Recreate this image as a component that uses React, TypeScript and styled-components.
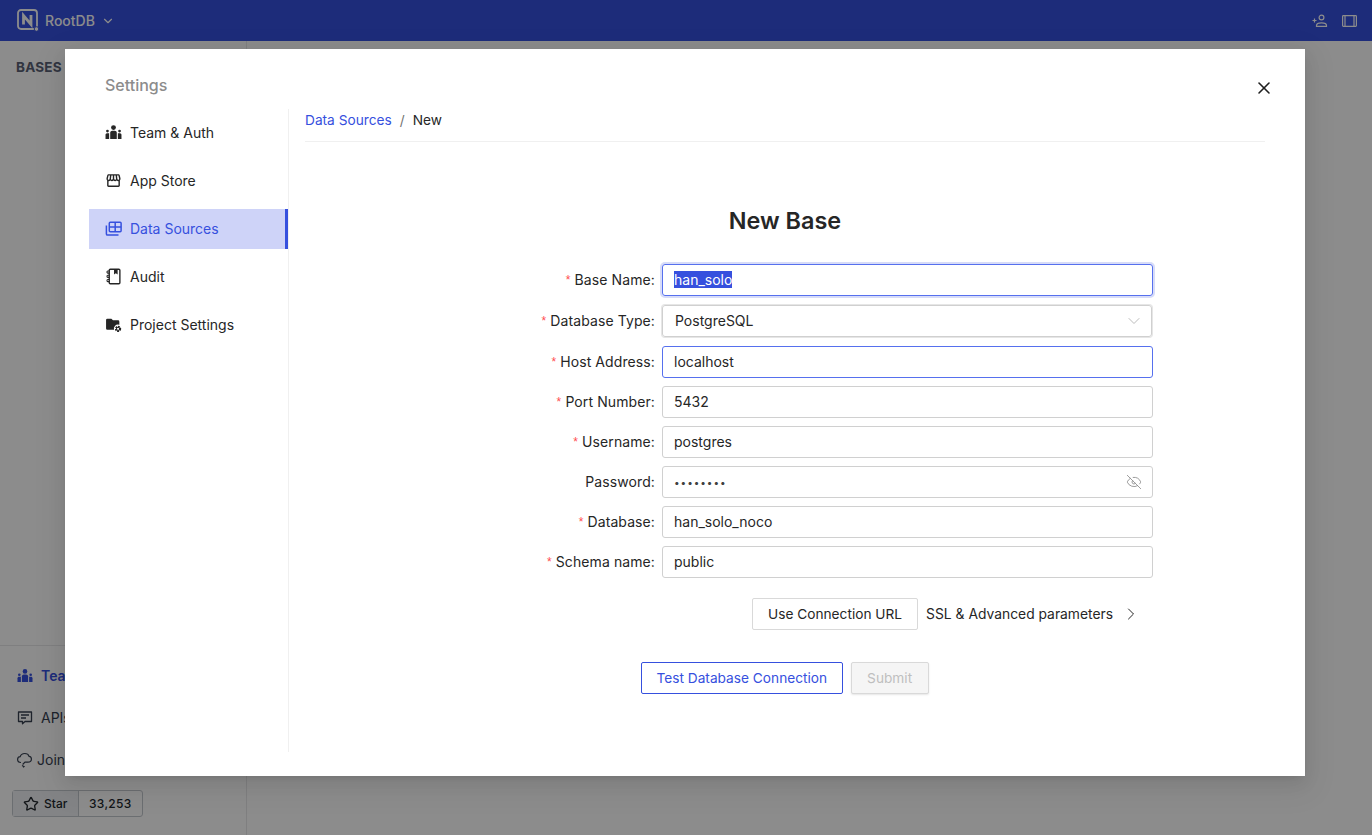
import styled, { createGlobalStyle } from "styled-components";
import { MdOutlineStorefront } from "react-icons/md";
import { LuChevronDown, LuChevronRight, LuEyeOff, LuStar, LuX } from "react-icons/lu";

const primary = "#3650de";

const GlobalStyle = createGlobalStyle`
  html, body { margin: 0; padding: 0; height: 100%; }
  body {
    font-family: Inter, "Liberation Sans", sans-serif;
    color: #262626;
    background: #fff;
    overflow: hidden;
  }
  * { box-sizing: border-box; }
`;

const Page = styled.div`
  position: relative;
  width: 1372px;
  height: 835px;
  display: flex;
  flex-direction: column;
  overflow: hidden;
`;

const TopBar = styled.header`
  height: 41px;
  flex: none;
  background: ${primary};
  color: #fff;
  display: flex;
  align-items: center;
  padding: 0 15px 0 17px;
`;

const Brand = styled.div`
  display: flex;
  align-items: center;
  gap: 6px;
  font-size: 14px;
  font-weight: 500;
  flex: 1;
  svg { flex: none; }
`;

const BarIcons = styled.div`
  display: flex;
  align-items: center;
  gap: 14px;
  color: #fff;
`;

const Workspace = styled.div`
  flex: 1;
  display: flex;
  min-height: 0;
`;

const SideNav = styled.aside`
  width: 247px;
  flex: none;
  border-right: 1px solid #e7e7e9;
  display: flex;
  flex-direction: column;
`;

const BasesTitle = styled.div`
  padding: 18px 16px 0;
  font-size: 13.5px;
  font-weight: 700;
  color: #5a6276;
  letter-spacing: 0.2px;
  flex: 1;
`;

const SideFooter = styled.div`
  border-top: 1px solid #e7e7e9;
  padding: 9px 12px 18px 17px;
  display: flex;
  flex-direction: column;
`;

const SideLink = styled.div<{ $active?: boolean; $gap?: number }>`
  height: 42px;
  padding-bottom: 1px;
  display: flex;
  align-items: center;
  gap: ${(p) => p.$gap ?? 8}px;
  font-size: 14px;
  font-weight: ${(p) => (p.$active ? 600 : 400)};
  color: ${(p) => (p.$active ? primary : "#374151")};
  svg { flex: none; }
`;

const StarGroup = styled.div`
  display: flex;
  align-self: flex-start;
  margin: 9px 0 0 -5px;
  height: 27px;
  border: 1px solid #c4c8ce;
  border-radius: 3px;
  font-size: 12px;
  font-weight: 500;
  color: #24292f;
`;

const StarButton = styled.div`
  display: flex;
  align-items: center;
  gap: 5px;
  width: 66px;
  padding-left: 10px;
  background: #eef1f4;
  border-right: 1px solid #c4c8ce;
`;

const StarCount = styled.div`
  display: flex;
  align-items: center;
  padding: 0 10px;
  letter-spacing: 0.3px;
`;

const Backdrop = styled.div`
  position: absolute;
  inset: 0;
  background: rgba(0, 0, 0, 0.45);
`;

const Modal = styled.div`
  position: absolute;
  left: 65px;
  top: 49px;
  width: 1240px;
  height: 727px;
  background: #fff;
  box-shadow: 0 6px 16px rgba(0, 0, 0, 0.08), 0 3px 6px -4px rgba(0, 0, 0, 0.12), 0 9px 28px 8px rgba(0, 0, 0, 0.05);
  padding: 24px 40px 24px 24px;
  display: flex;
  flex-direction: column;
`;

const CloseButton = styled.button`
  position: absolute;
  top: 29px;
  right: 31px;
  width: 20px;
  height: 20px;
  padding: 0;
  border: 0;
  background: none;
  color: #1f1f1f;
  display: flex;
  align-items: center;
  justify-content: center;
`;

const ModalTitle = styled.div`
  height: 36px;
  padding-left: 16px;
  line-height: 24px;
  font-size: 16px;
  font-weight: 500;
  color: #8c8c8c;
  flex: none;
`;

const ModalBody = styled.div`
  flex: 1;
  display: flex;
  min-height: 0;
`;

const Menu = styled.nav`
  width: 200px;
  flex: none;
  border-right: 1px solid #f0f0f0;
  padding-top: 4px;
  display: flex;
  flex-direction: column;
  gap: 8px;
`;

const MenuItem = styled.div<{ $selected?: boolean }>`
  height: 40px;
  padding: 0 0 2px 16px;
  display: flex;
  align-items: center;
  gap: 8px;
  font-size: 14px;
  color: ${(p) => (p.$selected ? primary : "#262626")};
  background: ${(p) => (p.$selected ? "#ced3f8" : "transparent")};
  border-right: ${(p) => (p.$selected ? `3px solid ${primary}` : "0")};
  svg { flex: none; }
`;

const Content = styled.main`
  flex: 1;
  min-width: 0;
  padding-left: 16px;
  display: flex;
  flex-direction: column;
`;

const Crumbs = styled.div`
  height: 33px;
  flex: none;
  border-bottom: 1px solid #f0f0f0;
  padding-bottom: 10px;
  display: flex;
  align-items: center;
  gap: 8px;
  font-size: 13.7px;
  color: #262626;
`;

const CrumbLink = styled.span`
  color: ${primary};
`;

const CrumbSep = styled.span`
  color: #737373;
`;

const Heading = styled.h1`
  margin: 63px 0 27px;
  height: 32px;
  line-height: 32px;
  font-size: 23.4px;
  font-weight: 600;
  text-align: center;
  color: #262626;
`;

const Form = styled.div`
  display: flex;
  flex-direction: column;
  gap: 8px;
`;

const Row = styled.div<{ $tight?: boolean }>`
  display: flex;
  height: 32px;
  margin-bottom: ${(p) => (p.$tight ? "1px" : "0")};
`;

const Label = styled.label`
  width: 357px;
  flex: none;
  padding: 0 7px 1px 0;
  display: flex;
  align-items: center;
  justify-content: flex-end;
  font-size: 14px;
  color: #262626;
  white-space: nowrap;
  letter-spacing: 0.1px;
`;

const Required = styled.span`
  color: #ff4d4f;
  font-size: 12px;
  margin-right: 4px;
  font-family: "Liberation Sans", sans-serif;
`;

const Field = styled.div<{ $focus?: "ring" | "line"; $select?: boolean }>`
  width: ${(p) => (p.$select ? "490px" : "491px")};
  height: 32px;
  flex: none;
  border-radius: 3px;
  border: 1px solid ${(p) => (p.$focus ? "#5670ee" : "#d0d0d0")};
  box-shadow: ${(p) =>
    p.$focus === "ring"
      ? "0 0 0 2px rgba(54, 80, 222, 0.2)"
      : p.$select
        ? "0 0 0 1px #e6e6e6"
        : "none"};
  padding: ${(p) => (p.$select ? "0 7px 1px 12px" : "0 10px 1px 11px")};
  display: flex;
  align-items: center;
  justify-content: space-between;
  font-size: 14px;
  color: #262626;
`;

const Selected = styled.span`
  background: ${primary};
  color: #fff;
  line-height: 22px;
`;

const Dots = styled.span`
  letter-spacing: 0.95px;
  font-size: 10px;
  color: #404040;
`;

const MutedIcon = styled.span<{ $light?: boolean }>`
  display: flex;
  color: ${(p) => (p.$light ? "#b5b5b5" : "#8c8c8c")};
`;

const ExtraRow = styled.div`
  display: flex;
  align-items: center;
  margin: 20px 0 0 447px;
  height: 32px;
  gap: 8px;
`;

const Button = styled.button<{ $variant?: "primary" | "disabled" }>`
  height: 32px;
  padding: ${(p) => (p.$variant === "primary" ? "0 14.5px 1px" : "0 15px 1px")};
  border-radius: 2px;
  font-family: inherit;
  font-size: 13.7px;
  min-width: 78px;
  background: ${(p) => (p.$variant === "disabled" ? "#f5f5f5" : "#fff")};
  color: ${(p) => (p.$variant === "primary" ? primary : p.$variant === "disabled" ? "#bfbfbf" : "#262626")};
  border: 1px solid ${(p) => (p.$variant === "primary" ? primary : "#d9d9d9")};
  box-shadow: ${(p) => (p.$variant === "disabled" ? "0 1px 2px rgba(0, 0, 0, 0.1)" : "none")};
`;

const Advanced = styled.div`
  display: flex;
  align-items: center;
  gap: 8px;
  padding-bottom: 1px;
  font-size: 13.85px;
  color: #262626;
`;

const Actions = styled.div`
  display: flex;
  margin: 32px 0 0 336px;
  gap: 8px;
`;

const LogoMark = () => (
  <svg width="22" height="23" viewBox="0 0 22 23" fill="none">
    <rect x="1" y="1" width="19" height="19" rx="3" stroke="currentColor" strokeWidth="1.8" />
    <path d="M6.500 15.500V6.500L14 15.500V6" stroke="currentColor" strokeWidth="2.8" />
    <circle cx="19.500" cy="20" r="2.300" fill="currentColor" stroke={primary} strokeWidth="1" />
  </svg>
);

const AddUserIcon = () => (
  <svg width="16" height="16" viewBox="0 0 16 16" fill="none" stroke="currentColor" strokeWidth="1.2">
    <circle cx="9.500" cy="4.500" r="2.400" />
    <path d="M4.500 13.300v-.8c0-1.600 2.400-2.700 5-2.700s5 1.100 5 2.700v.8z" />
    <path d="M0.500 7.500h4M2.500 5.500v4" />
  </svg>
);

const PanelIcon = () => (
  <svg width="15" height="12" viewBox="0 0 15 12" fill="none" stroke="currentColor" strokeWidth="1.2">
    <rect x="0.600" y="0.600" width="13.800" height="10.800" rx="0.800" />
    <path d="M3 .6v10.800M12 .6v10.800" />
  </svg>
);

const TeamIcon = ({ size = 17 }: { size?: number }) => (
  <svg width={size} height={size} viewBox="0 0 16 16" fill="currentColor">
    <circle cx="8" cy="3.400" r="2.300" />
    <path d="M4.900 14V8.300c0-1.100.9-1.900 1.900-1.900h2.400c1 0 1.900.8 1.900 1.900V14z" />
    <circle cx="2.300" cy="6.700" r="1.300" />
    <path d="M.5 14v-3.800c0-.8.600-1.500 1.400-1.500h2V14z" />
    <circle cx="13.700" cy="6.700" r="1.300" />
    <path d="M15.500 14v-3.800c0-.8-.6-1.500-1.400-1.500h-2V14z" />
  </svg>
);

const TablesIcon = () => (
  <svg width="17" height="17" viewBox="0 0 17 17" fill="none" stroke="currentColor" strokeWidth="1.5">
    <rect x="4.300" y="2.200" width="11.800" height="9.600" rx="1" />
    <path d="M4.300 7h11.800M10.200 2.200v9.600" />
    <path d="M1.400 5.500v8.400c0 .7.500 1.200 1.200 1.200h10.900" />
  </svg>
);

const NotebookIcon = () => (
  <svg width="17" height="17" viewBox="0 0 16 16" fill="none" stroke="currentColor" strokeWidth="1.3">
    <rect x="4" y="1.200" width="10" height="13.600" rx="1" />
    <path d="M4 2.800H2.600c-1 0-1 2 0 2H4M4 6.800H2.600c-1 0-1 2 0 2H4M4 10.800H2.600c-1 0-1 2 0 2H4" strokeWidth="1" />
    <path d="M8.500 1.200h3.400v5l-1.700-1.300-1.700 1.300z" fill="currentColor" stroke="none" />
  </svg>
);

const FolderGearIcon = () => (
  <svg width="17" height="17" viewBox="0 0 16 16" fill="currentColor">
    <path d="M1 3.800a1.200 1.200 0 0 1 1.200-1.200h3.800l1.500 1.500h4.800A1.200 1.200 0 0 1 13.500 5.300V8.300a3.800 3.800 0 0 0-5 4.700H2.200A1.200 1.200 0 0 1 1 11.800z" />
    <circle cx="12.300" cy="12.100" r="2.100" fill="none" stroke="currentColor" strokeWidth="1.700" strokeDasharray="1.500 0.700" />
    <circle cx="12.300" cy="12.100" r="1.500" fill="none" stroke="currentColor" strokeWidth="1" />
  </svg>
);

const ChatIcon = () => (
  <svg width="16" height="16" viewBox="0 0 16 16" fill="none" stroke="currentColor" strokeWidth="1.3">
    <path d="M1.500 2h13v9.500H8l-2.500 2.200v-2.200h-4z" strokeLinejoin="round" />
    <path d="M4 5h8M4 8h5" />
  </svg>
);

const CloudIcon = () => (
  <svg width="15" height="16" viewBox="0 0 15 16" fill="none" stroke="currentColor" strokeWidth="1.2">
    <path d="M4 10.500c-2 0-3.400-1.200-3.400-3 0-1.600 1.200-2.700 2.600-2.800C3.700 2.900 5.400 1.500 7.800 1.500c2 0 3.700 1.100 4.300 2.900 1.400.2 2.300 1.200 2.300 2.500 0 2-1.500 3.200-3.600 3.200H8L5.600 12.500" />
    <path d="M5 13.500l2 1-1 .8" />
  </svg>
);

const fields = [
  { label: "Host Address", value: "localhost", required: true, focus: "line" as const },
  { label: "Port Number", value: "5432", required: true },
  { label: "Username", value: "postgres", required: true },
];

export default function App() {
  return (
    <Page>
      <GlobalStyle />
      <TopBar>
        <Brand>
          <LogoMark />
          RootDB
          <LuChevronDown size={14} />
        </Brand>
        <BarIcons>
          <AddUserIcon />
          <PanelIcon />
        </BarIcons>
      </TopBar>
      <Workspace>
        <SideNav>
          <BasesTitle>BASES</BasesTitle>
          <SideFooter>
            <SideLink $active><TeamIcon size={16} />Team &amp; Settings</SideLink>
            <SideLink><ChatIcon />APIs &amp; Support</SideLink>
            <SideLink $gap={5}><CloudIcon />Join Community</SideLink>
            <StarGroup>
              <StarButton><LuStar size={16} strokeWidth={2} />Star</StarButton>
              <StarCount>33,253</StarCount>
            </StarGroup>
          </SideFooter>
        </SideNav>
      </Workspace>
      <Backdrop />
      <Modal>
        <CloseButton aria-label="Close"><LuX size={20} strokeWidth={1.9} /></CloseButton>
        <ModalTitle>Settings</ModalTitle>
        <ModalBody>
          <Menu>
            <MenuItem><TeamIcon />Team &amp; Auth</MenuItem>
            <MenuItem><MdOutlineStorefront size={17} />App Store</MenuItem>
            <MenuItem $selected><TablesIcon />Data Sources</MenuItem>
            <MenuItem><NotebookIcon />Audit</MenuItem>
            <MenuItem><FolderGearIcon />Project Settings</MenuItem>
          </Menu>
          <Content>
            <Crumbs>
              <CrumbLink>Data Sources</CrumbLink>
              <CrumbSep>/</CrumbSep>
              New
            </Crumbs>
            <Heading>New Base</Heading>
            <Form>
              <Row $tight>
                <Label><Required>*</Required>Base Name:</Label>
                <Field $focus="ring"><span><Selected>han_solo</Selected></span></Field>
              </Row>
              <Row $tight>
                <Label><Required>*</Required>Database Type:</Label>
                <Field $select>PostgreSQL<MutedIcon $light><LuChevronDown size={20} strokeWidth={1.1} /></MutedIcon></Field>
              </Row>
              {fields.map((f) => (
                <Row key={f.label}>
                  <Label><Required>*</Required>{f.label}:</Label>
                  <Field $focus={f.focus}>{f.value}</Field>
                </Row>
              ))}
              <Row>
                <Label>Password:</Label>
                <Field><Dots>••••••••</Dots><MutedIcon><LuEyeOff size={16} strokeWidth={1.3} /></MutedIcon></Field>
              </Row>
              <Row>
                <Label><Required>*</Required>Database:</Label>
                <Field>han_solo_noco</Field>
              </Row>
              <Row>
                <Label><Required>*</Required>Schema name:</Label>
                <Field>public</Field>
              </Row>
            </Form>
            <ExtraRow>
              <Button>Use Connection URL</Button>
              <Advanced>SSL &amp; Advanced parameters<LuChevronRight size={20} strokeWidth={1.2} /></Advanced>
            </ExtraRow>
            <Actions>
              <Button $variant="primary">Test Database Connection</Button>
              <Button $variant="disabled">Submit</Button>
            </Actions>
          </Content>
        </ModalBody>
      </Modal>
    </Page>
  );
}
